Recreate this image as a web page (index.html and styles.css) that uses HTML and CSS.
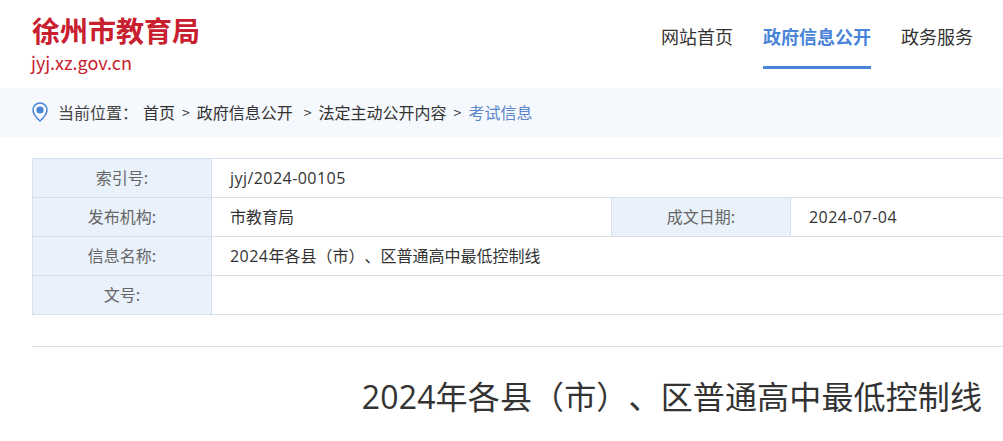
FILE: index.html
```html
<!DOCTYPE html>
<html lang="zh-CN">
<head>
    <meta charset="UTF-8">
    <meta name="viewport" content="width=device-width, initial-scale=1.0">
    <title>2024年各县（市）、区普通高中最低控制线</title>
    <link rel="stylesheet" href="styles.css">
</head>
<body>

    <header class="header">
        <div class="logo">
            <div class="logo-name">徐州市教育局</div>
            <div class="logo-url">jyj.xz.gov.cn</div>
        </div>
        <nav class="nav">
            <a href="#">网站首页</a>
            <a href="#" class="active">政府信息公开</a>
            <a href="#">政务服务</a>
        </nav>
    </header>

    <div class="crumbs">
        <svg class="pin" width="16" height="20" viewBox="0 0 16 20">
            <path d="M8 1C4.1 1 1 4.1 1 8c0 4.6 5 9.200 7 11 2-1.800 7-6.400 7-11 0-3.900-3.100-7-7-7z" fill="none" stroke="#4a84d8" stroke-width="1.500"/>
            <circle cx="8" cy="8" r="3.600" fill="#4a84d8"/>
        </svg>
        <span class="here">当前位置：</span>
        <a href="#">首页</a>
        <span class="sep">&gt;</span>
        <a href="#">政府信息公开</a>
        <span class="sep wide">&gt;</span>
        <a href="#">法定主动公开内容</a>
        <span class="sep">&gt;</span>
        <a href="#" class="current">考试信息</a>
    </div>

    <main class="content">
        <table class="info">
            <colgroup>
                <col class="col-label">
                <col class="col-value">
                <col class="col-label">
                <col>
            </colgroup>
            <tr>
                <th>索引号:</th>
                <td colspan="3"><span class="num">jyj/2024-00105</span></td>
            </tr>
            <tr>
                <th>发布机构:</th>
                <td>市教育局</td>
                <th>成文日期:</th>
                <td><span class="num">2024-07-04</span></td>
            </tr>
            <tr>
                <th>信息名称:</th>
                <td colspan="3"><span class="num">2024</span>年各县（市）、区普通高中最低控制线</td>
            </tr>
            <tr>
                <th>文号:</th>
                <td colspan="3"></td>
            </tr>
        </table>

        <h1 class="title"><span class="title-num">2024</span>年各县（市）、区普通高中最低控制线</h1>
    </main>

</body>
</html>
```

FILE: styles.css
```css
:root{
    --font-primary: "Noto Sans CJK SC", "Noto Sans", sans-serif;
    --font-latin: "Open Sans", "Noto Sans CJK SC", sans-serif;
    --accent: #4a84d8;
    --line: #d5deea;
}

html, body{
    overflow: hidden;
}

body{
    margin: 0;
    height: 441px;
    font-family: var(--font-primary);
    color: #333;
    background-color: #fff;
    text-spacing-trim: space-all;
    font-feature-settings: "palt" 0, "halt" 0;
}

a{
    color: inherit;
    text-decoration: none;
}

.header{
    display: flex;
    justify-content: space-between;
    height: 88px;
    padding: 0 30px 0 31px;
}

.logo-name{
    margin: 11px 0 0 1px;
    font-size: 28px;
    line-height: 39px;
    font-weight: 700;
    color: #c9202f;
}

.logo-url{
    font-size: 18px;
    line-height: 24px;
    color: #c9202f;
}

.nav{
    display: flex;
    gap: 30px;
}

.nav a{
    padding-top: 23px;
    height: 43px;
    line-height: 26px;
    font-size: 18px;
}

.nav a.active{
    font-weight: 700;
    color: var(--accent);
    border-bottom: 3px solid var(--accent);
}

.crumbs{
    display: flex;
    align-items: center;
    height: 48px;
    padding: 0 0 1px 32px;
    font-size: 16px;
    background-color: #f5f8fc;
}

.pin{
    margin-right: 10px;
}

.here{
    width: 85px;
    color: #444;
}

.sep{
    margin: 0 7px;
    font-size: 14px;
}

.sep.wide{
    margin-left: 11px;
}

.current{
    color: #5b86c9;
}

.content{
    width: 1280px;
    margin: 21px 0 0 32px;
}

.info{
    width: 100%;
    table-layout: fixed;
    border-collapse: collapse;
    font-size: 16px;
}

.col-label{
    width: 179px;
}

.col-value{
    width: 400px;
}

.info th, .info td{
    height: 36px;
    padding: 0 0 2px;
    border: 1px solid var(--line);
}

.info th{
    font-weight: 400;
    color: #666;
    background-color: #e9f1fb;
}

.info td{
    padding-left: 18px;
}

.num{
    font-family: var(--font-latin);
    letter-spacing: 0.45px;
}

.title{
    margin: 31px 0 0;
    padding-top: 24px;
    border-top: 1px solid var(--line);
    text-align: center;
    font-size: 32px;
    line-height: 48px;
    font-weight: 400;
    letter-spacing: 0.15px;
}

.title-num{
    font-family: var(--font-latin);
}
```
